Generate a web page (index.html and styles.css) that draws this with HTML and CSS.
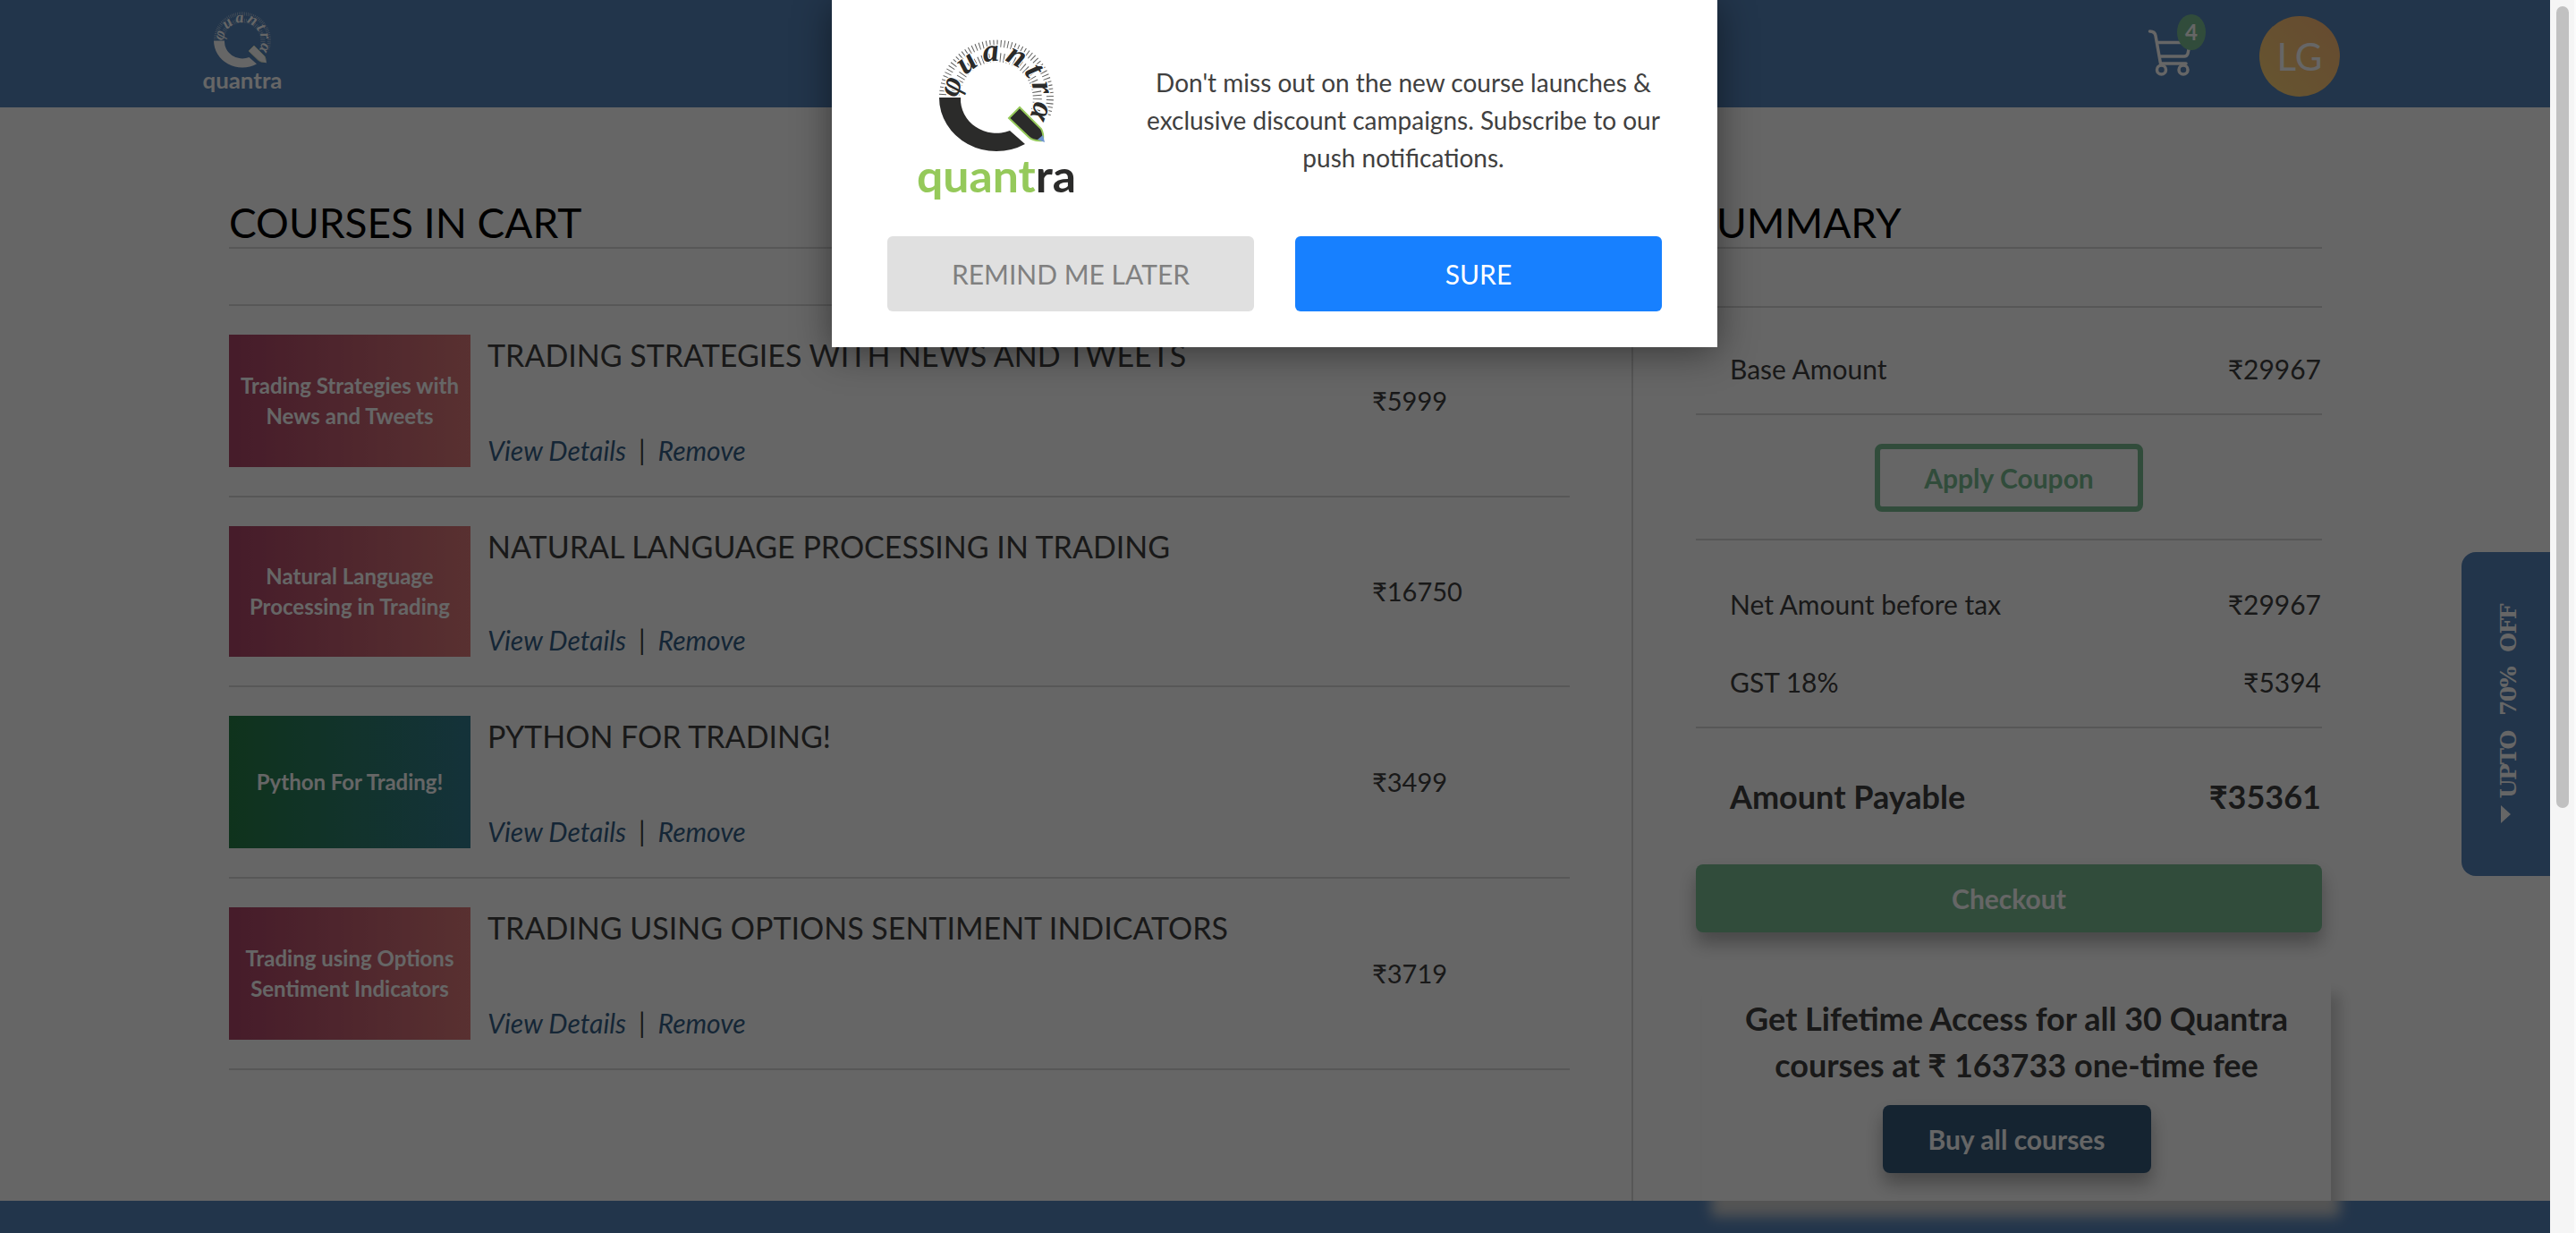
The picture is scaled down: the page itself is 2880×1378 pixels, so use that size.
FILE: index.html
```html
<!DOCTYPE html>
<html lang="en">
<head>
<meta charset="utf-8">
<title>Quantra cart</title>
<link rel="stylesheet" href="styles.css">
</head>
<body>
<div class="window">
  <div class="main">
    <header class="topbar">
      <svg class="logo logo-header" viewBox="0 0 240 220" aria-label="quantra">
        <defs><path id="ringA" d="M72 90A42 42 0 1 1 152 108"/></defs>
        <path class="hatch h-out" d="M54 86A60 60 0 1 1 170 110"/>
        <path class="hatch h-in" d="M68 86A46 46 0 1 1 157 106"/>
        <text class="ringtext"><textPath href="#ringA">φuantrα</textPath></text>
        <path class="ink" d="M50 89H74A40 38 0 0 0 129 126L146 141A64 60 0 0 1 50 89Z"/>
        <path class="ink pen" d="M128 112L140 100L164 124Q167 129 166 137Q155 138 150 133Z"/>
        <path class="tip" d="M160 136L166 131L168 139Z"/>
        <text class="wordmark" x="25" y="195" textLength="178" lengthAdjust="spacingAndGlyphs"><tspan class="wm-a">quant</tspan><tspan class="wm-b">ra</tspan></text>
      </svg>
      <div class="top-actions">
        <div class="cart">
          <svg class="cart-icon" viewBox="0 0 50 52">
            <path d="M2.500 2C7 2 8.500 4 9 7L14.500 38H43M11.500 14.500H47.500L45 27Q44 30 41 30H13.500"/>
            <circle cx="15.500" cy="45" r="5"/>
            <circle cx="40" cy="45" r="5"/>
          </svg>
          <span class="badge">4</span>
        </div>
        <div class="avatar">LG</div>
      </div>
    </header>

    <div class="content">
      <section class="cart-col">
        <h2 class="col-title">COURSES IN CART</h2>
        <ul class="course-list">
          <li class="course">
            <div class="thumb thumb-red">Trading Strategies with<br>News and Tweets</div>
            <div class="course-body">
              <div class="course-name">TRADING STRATEGIES WITH NEWS AND TWEETS</div>
              <div class="course-links"><a>View Details</a><span class="sep">|</span><a>Remove</a></div>
            </div>
            <div class="price">₹5999</div>
          </li>
          <li class="course">
            <div class="thumb thumb-red thumb-short">Natural Language<br>Processing in Trading</div>
            <div class="course-body">
              <div class="course-name">NATURAL LANGUAGE PROCESSING IN TRADING</div>
              <div class="course-links"><a>View Details</a><span class="sep">|</span><a>Remove</a></div>
            </div>
            <div class="price">₹16750</div>
          </li>
          <li class="course">
            <div class="thumb thumb-green">Python For Trading!</div>
            <div class="course-body">
              <div class="course-name">PYTHON FOR TRADING!</div>
              <div class="course-links"><a>View Details</a><span class="sep">|</span><a>Remove</a></div>
            </div>
            <div class="price">₹3499</div>
          </li>
          <li class="course">
            <div class="thumb thumb-red">Trading using Options<br>Sentiment Indicators</div>
            <div class="course-body">
              <div class="course-name">TRADING USING OPTIONS SENTIMENT INDICATORS</div>
              <div class="course-links"><a>View Details</a><span class="sep">|</span><a>Remove</a></div>
            </div>
            <div class="price">₹3719</div>
          </li>
        </ul>
      </section>

      <aside class="summary-col">
        <h2 class="col-title summary-title">SUMMARY</h2>
        <div class="rule-block"></div>
        <div class="line base-line"><span>Base Amount</span><span>₹29967</span></div>
        <div class="coupon-block"><button class="btn-coupon">Apply Coupon</button></div>
        <div class="tax-block">
          <div class="line"><span>Net Amount before tax</span><span>₹29967</span></div>
          <div class="line"><span>GST 18%</span><span>₹5394</span></div>
        </div>
        <div class="line payable"><span>Amount Payable</span><span>₹35361</span></div>
        <button class="btn-checkout">Checkout</button>
        <div class="lifetime">
          <p class="lifetime-text">Get Lifetime Access for all 30 Quantra<br>courses at ₹ 163733 one-time fee</p>
          <button class="btn-buy">Buy all courses</button>
        </div>
      </aside>
    </div>

    <footer class="footer"></footer>

    <div class="side-tab">
      <span class="side-text">UPTO 70% OFF</span>
      <span class="side-arrow"></span>
    </div>

    <div class="overlay"></div>

    <div class="modal">
      <div class="modal-top">
        <svg class="logo logo-modal" viewBox="0 0 240 220" aria-label="quantra">
          <defs><path id="ringB" d="M72 90A42 42 0 1 1 152 108"/></defs>
          <path class="hatch h-out" d="M54 86A60 60 0 1 1 170 110"/>
          <path class="hatch h-in" d="M68 86A46 46 0 1 1 157 106"/>
          <text class="ringtext"><textPath href="#ringB">φuantrα</textPath></text>
          <path class="ink" d="M50 89H74A40 38 0 0 0 129 126L146 141A64 60 0 0 1 50 89Z"/>
          <path class="ink pen" d="M128 112L140 100L164 124Q167 129 166 137Q155 138 150 133Z"/>
          <path class="tip" d="M160 136L166 131L168 139Z"/>
          <text class="wordmark" x="25" y="195" textLength="178" lengthAdjust="spacingAndGlyphs"><tspan class="wm-a">quant</tspan><tspan class="wm-b">ra</tspan></text>
        </svg>
        <p class="modal-text">Don't miss out on the new course launches &amp;<br>exclusive discount campaigns. Subscribe to our<br>push notifications.</p>
      </div>
      <div class="modal-actions">
        <button class="btn-later">REMIND ME LATER</button>
        <button class="btn-sure">SURE</button>
      </div>
    </div>
  </div>
  <div class="scrollbar"><div class="scroll-thumb"></div></div>
</div>
</body>
</html>
```

FILE: styles.css
```css
* { box-sizing: border-box; }
html, body { margin: 0; height: 100%; }
body { font-family: "Lato", "Noto Sans", sans-serif; color: #404040; background: #fff; }
button { font-family: inherit; border: 0; cursor: pointer; }

.window { display: flex; height: 100vh; overflow: hidden; }
.main { position: relative; flex: 1; min-width: 0; display: flex; flex-direction: column; overflow: hidden; background: #fff; }

.scrollbar { width: 29px; flex: none; background: #f5f5f5; padding: 7px 6px 0 7px; border-right: 2px solid #fbfbfb; }
.scroll-thumb { height: 896px; background: #c1c1c1; border-radius: 8px; }

.topbar { flex: none; height: 120px; background: #5584bb; display: flex; justify-content: space-between; padding-left: 214px; padding-right: 235px; }
.logo-header { width: 120px; height: 110px; margin-top: 1px; --ink: #fff; --accent: #fff; --pen: #dfe8c9; --tip: #fff; --bg: #5584bb; }
.top-actions { display: flex; gap: 60px; }
.cart { position: relative; width: 65px; height: 120px; }
.cart-icon { position: absolute; left: 0; top: 33px; width: 50px; height: 52px; fill: none; stroke: #fff; stroke-width: 3.500; stroke-linecap: round; stroke-linejoin: round; }
.badge { position: absolute; left: 33px; top: 16px; width: 32px; height: 40px; border-radius: 50%; background: #7abf95; color: #fff; font-size: 24px; font-weight: 700; line-height: 40px; text-align: center; }
.avatar { width: 90px; height: 90px; margin-top: 18px; border-radius: 50%; background: linear-gradient(45deg, #ffd678, #ffba78); color: #fff; font-size: 42px; line-height: 90px; text-align: center; }

.hatch { fill: none; stroke: var(--ink); stroke-dasharray: 1 3; opacity: .75; }
.h-out { stroke-width: 8; }
.h-in { stroke-width: 10; }
.ringtext { font-family: "Liberation Serif", serif; font-style: italic; font-weight: 700; font-size: 36px; letter-spacing: 5px; fill: var(--ink); stroke: var(--bg); stroke-width: 2.500; paint-order: stroke; }
.ink { fill: var(--ink); }
.pen { stroke: var(--pen); stroke-width: 2; }
.tip { fill: var(--tip); }
.wordmark { font-family: "Lato", sans-serif; font-weight: 700; font-size: 50px; }
.wm-a { fill: var(--accent); }
.wm-b { fill: var(--ink); }

.content { flex: 1; min-height: 0; display: flex; padding: 102px 0 0 256px; }
.cart-col { width: 1499px; flex: none; }
.col-title { margin: 0; height: 56px; line-height: 54px; font-size: 46px; font-weight: 400; color: #000; border-bottom: 2px solid #d9d9d9; }
.summary-title { text-indent: -2px; }
.course-list { list-style: none; margin: 62px 0 0; padding: 0; border-top: 2px solid #d9d9d9; }
.course { display: flex; padding: 32px 0; border-bottom: 2px solid #d9d9d9; }
.thumb { flex: none; width: 270px; height: 148px; display: flex; align-items: center; justify-content: center; text-align: center; color: #fff; font-size: 24px; font-weight: 700; line-height: 34px; }
.thumb-short { height: 146px; }
.thumb-red { background: linear-gradient(90deg, #ae4669, #de7a7a); }
.thumb-green { background: linear-gradient(90deg, #278048, #337e91); }
.course-body { flex: 1; min-width: 0; display: flex; flex-direction: column; justify-content: space-between; padding-left: 19px; }
.course-name { font-size: 34px; line-height: 46px; }
.course-links { font-size: 30px; line-height: 38px; font-style: italic; color: #365f88; }
.sep { margin: 0 14px; font-style: normal; color: #404040; }
.price { width: 221px; flex: none; align-self: center; font-size: 29px; line-height: 40px; }

.summary-col { width: 772px; flex: none; margin-left: 69px; padding-left: 70px; border-left: 2px solid #d9d9d9; }
.rule-block { height: 66px; border-bottom: 2px solid #d9d9d9; }
.line { display: flex; justify-content: space-between; padding: 0 1px 0 38px; font-size: 30px; line-height: 40px; }
.base-line { padding-top: 48px; padding-bottom: 30px; border-bottom: 2px solid #d9d9d9; }
.coupon-block { height: 140px; padding-top: 32px; display: flex; justify-content: center; align-items: flex-start; border-bottom: 2px solid #d9d9d9; }
.btn-coupon { width: 300px; height: 76px; background: #fff; border: 6px solid #7abf95; border-radius: 8px; color: #7abf95; font-size: 30px; font-weight: 700; }
.tax-block { display: flex; flex-direction: column; gap: 47px; padding: 51px 0 30px; border-bottom: 2px solid #d9d9d9; }
.payable { padding-top: 54px; font-size: 36px; line-height: 44px; font-weight: 700; }
.btn-checkout { display: block; width: 700px; height: 76px; margin-top: 54px; background: #7abf95; border-radius: 8px; color: #fff; font-size: 30px; font-weight: 700; box-shadow: 0 12px 20px rgba(0,0,0,.3); }
.lifetime { position: relative; z-index: 1; width: 703px; height: 249px; margin: 51px 0 0 7px; padding-top: 19px; display: flex; flex-direction: column; align-items: center; background: #fff; box-shadow: 10px 18px 14px #d3d3d3; }
.lifetime-text { margin: 0; text-align: center; font-size: 36px; line-height: 52px; font-weight: 700; }
.btn-buy { width: 300px; height: 76px; margin-top: 19px; background: #365a7b; border-radius: 8px; color: #fff; font-size: 30px; font-weight: 700; box-shadow: 0 12px 20px rgba(0,0,0,.3); }

.footer { flex: none; height: 36px; background: #5584bb; }

.side-tab { position: absolute; right: 0; top: 617px; width: 99px; height: 362px; padding-left: 6px; display: flex; flex-direction: column; align-items: center; justify-content: center; gap: 8px; background: #5584bb; border-radius: 16px 0 0 16px; color: #fff; }
.side-text { writing-mode: vertical-rl; transform: rotate(180deg); font-family: "DejaVu Serif", serif; font-weight: 700; font-size: 25px; line-height: 30px; letter-spacing: -1.500px; word-spacing: 10px; }
.side-arrow { width: 0; height: 0; border-left: 11px solid #fff; border-top: 10px solid transparent; border-bottom: 10px solid transparent; margin-left: -6px; }

.overlay { position: absolute; z-index: 5; inset: 0; background: rgba(0,0,0,.6); }

.modal { position: absolute; z-index: 6; left: 930px; top: 0; width: 990px; height: 388px; padding: 0 62px; background: #fff; box-shadow: 0 6px 40px rgba(0,0,0,.45); }
.modal-top { height: 264px; display: flex; }
.logo-modal { flex: none; width: 240px; height: 220px; margin: 20px 40px 0 8px; --ink: #2b2b2a; --accent: #95c95a; --pen: #95c95a; --tip: #6f95d0; --bg: #fff; }
.modal-text { margin: 71px 0 0; width: 578px; text-align: center; color: #404040; font-size: 28px; line-height: 42px; white-space: nowrap; }
.modal-actions { display: flex; gap: 46px; }
.btn-later, .btn-sure { width: 410px; height: 84px; border-radius: 6px; font-size: 30px; }
.btn-later { background: #e0e0e0; color: #808080; }
.btn-sure { background: #1780ff; color: #fff; }
```
